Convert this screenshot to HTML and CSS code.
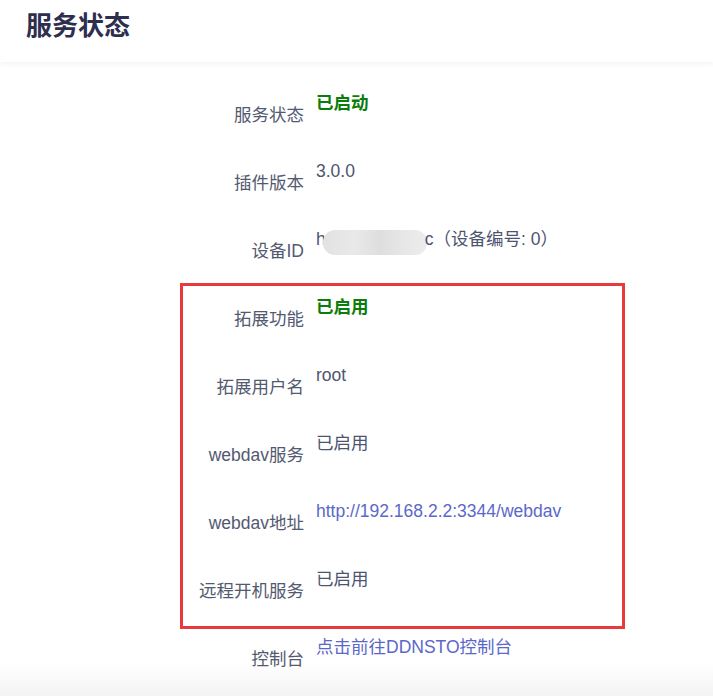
FILE: index.html
```html
<!DOCTYPE html>
<html lang="zh-CN">
<head>
<meta charset="utf-8">
<title>服务状态</title>
<link rel="stylesheet" href="styles.css">
</head>
<body>
<header class="page-header">
  <h1 class="title">服务状态</h1>
</header>
<main class="content">
  <div class="row">
    <div class="label">服务状态</div>
    <div class="value ok">已启动</div>
  </div>
  <div class="row">
    <div class="label">插件版本</div>
    <div class="value">3.0.0</div>
  </div>
  <div class="row">
    <div class="label">设备ID</div>
    <div class="value">h<span class="blur"></span>c（设备编号: 0）</div>
  </div>
  <div class="row">
    <div class="label">拓展功能</div>
    <div class="value ok">已启用</div>
  </div>
  <div class="row">
    <div class="label">拓展用户名</div>
    <div class="value">root</div>
  </div>
  <div class="row">
    <div class="label">webdav服务</div>
    <div class="value">已启用</div>
  </div>
  <div class="row">
    <div class="label">webdav地址</div>
    <div class="value"><a class="link" href="#">http://192.168.2.2:3344/webdav</a></div>
  </div>
  <div class="row">
    <div class="label">远程开机服务</div>
    <div class="value">已启用</div>
  </div>
  <div class="row">
    <div class="label">控制台</div>
    <div class="value"><a class="link" href="#">点击前往DDNSTO控制台</a></div>
  </div>
  <div class="highlight"></div>
</main>
</body>
</html>
```
FILE: styles.css
```css
html, body {
  margin: 0;
  padding: 0;
}
body {
  font-family: "Liberation Sans", "Noto Sans CJK SC", sans-serif;
  font-size: 17.5px;
  background: linear-gradient(to bottom, #ffffff 0, #ffffff 662px, #f3f3f3 696px);
  min-height: 696px;
  color: #4c5470;
}
.page-header {
  height: 62px;
  padding-left: 26px;
  background: #fff;
  box-shadow: 0 2px 6px rgba(0, 0, 0, 0.05);
  display: flex;
  align-items: center;
  position: relative;
  z-index: 1;
}
.title {
  margin: 0;
  font-size: 26px;
  font-weight: bold;
  color: #2e2e4e;
  line-height: 1;
  padding-bottom: 10px;
}
.content {
  position: relative;
  padding-top: 29px;
}
.row {
  display: flex;
  height: 68px;
  gap: 12px;
}
.label {
  width: 304px;
  text-align: right;
  line-height: 24px;
  padding-top: 12px;
  color: #535a70;
}
.value {
  line-height: 24px;
  color: #4c5470;
}
.ok {
  color: #0b7d0b;
  font-weight: bold;
}
.link {
  color: #5b68c9;
  text-decoration: none;
}
.blur {
  display: inline-block;
  width: 104px;
  height: 25px;
  margin-left: -3px;
  margin-right: -2px;
  vertical-align: -10px;
  border-radius: 12px;
  background: linear-gradient(to right, #e2e2e2 0, #e9e9e9 30%, #dedede 55%, #e8e8e8 80%, #ececec 100%);
}
.highlight {
  position: absolute;
  left: 180px;
  top: 221px;
  width: 439px;
  height: 340px;
  border: 3px solid #e8393b;
  pointer-events: none;
}
```
